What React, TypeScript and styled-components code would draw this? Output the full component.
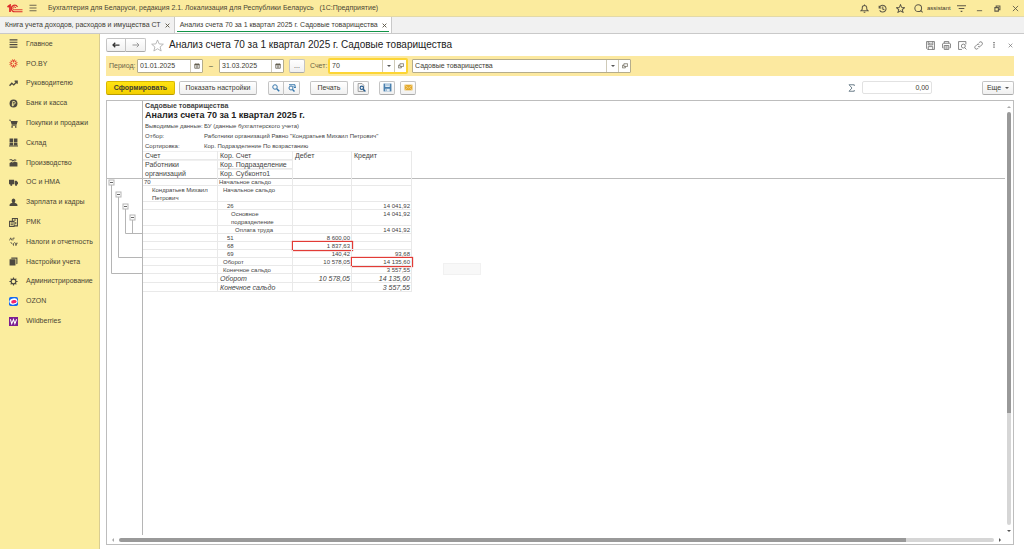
import React from "react";
import styled, { createGlobalStyle, css } from "styled-components";

const Global = createGlobalStyle`
  * { box-sizing: border-box; }
  html, body, #root { height: 100%; }
  body {
    margin: 0;
    background: #fff;
    color: #403c33;
    font: 7px/10px "Liberation Sans", Arial, sans-serif;
    overflow: hidden;
  }
  button, input { font: inherit; color: inherit; }
  ul, h1, h2, p, dl, dd { margin: 0; padding: 0; }
  svg { display: block; flex: none; }
`;

/* ---------- icons ---------- */

const paths: Record<string, React.ReactNode> = {
  menu: <path d="M1 2.5h14M1 8h14M1 13.5h14" />,
  bell: <path d="M1.500 12h13l-2.500-2.500V6.500C12 4 10.500 2.500 8 2.500S4 4 4 6.500v3zM6.500 14.500h3M8 1v1.500" />,
  history: <path d="M2 3v4h4M2.500 7A6 6 0 1 1 3 11M8.500 4.500V9l3 1.500" />,
  star: <path d="M8 1.200l2 4.800 5.200.4-4 3.400 1.300 5L8 12l-4.500 2.800 1.300-5-4-3.400L6 6z" />,
  search: <><circle cx="7.500" cy="7.500" r="6" /><path d="M11.500 11.500l4 3.500" /></>,
  filter: <path d="M0 3h16M3 8h10M6.500 13h3" />,
  min: <path d="M2 13h12" />,
  restore: <><path d="M2 6h8v8H2zM5 6V2.500h8.500v8.500H10" /></>,
  close: <path d="M2 2l12 12M14 2L2 14" />,
  save: <><path d="M1 1h14v14H3l-2-2z" /><path d="M4 1v6h8V1M4 15v-5h8v5M6.500 3v3M9 3v3" /></>,
  print: <><path d="M4 4V1h8v3M2.500 12H1V5l2-1h10l2 1v7h-1.500" /><path d="M4 8h8v7H4zM6 10.500h4M6 12.700h4" /></>,
  preview: <><path d="M14 6V1H1v14h6" /><circle cx="9.500" cy="9" r="3.500" /><path d="M12 12l3 3" /></>,
  link: <path d="M7 9.500a3 3 0 0 0 4.300 0L14.500 6A3 3 0 0 0 10.200 2L8.500 3.500M9.500 6.500a3 3 0 0 0-4.300 0L1.800 10A3 3 0 0 0 6 14l1.500-1.500" />,
  left: <path d="M15 8H2M6.500 3.500L2 8l4.500 4.500" />,
  right: <path d="M1 8h13M9.500 3.500L14 8l-4.500 4.500" />,
  calendar: <><path d="M2 3h12v11H2z" /><path d="M2 4.500h12" strokeWidth="3" /><path d="M5 1v3M11 1v3M5 8h6M5 11h6" /></>,
  open: <><path d="M5 2h10v7H5z" /><path d="M5 6H1v7h8V9" /></>,
};

type IconProps = { name: keyof typeof paths; size?: number; color?: string; w?: number };
const Icon = ({ name, size = 9, color = "#5d5848", w = 1.6 }: IconProps) => (
  <svg width={size} height={size} viewBox="0 0 16 16" fill="none" stroke={color} strokeWidth={w} aria-hidden>
    {paths[name]}
  </svg>
);

const dark = "#4d4940";
const navIcons: Record<string, React.ReactNode> = {
  main: <path d="M1 1.500h14M1 5.800h14M1 10.100h14M1 14.400h14" stroke={dark} strokeWidth="2" />,
  po: <g stroke="#e2492f" strokeWidth="1.800" fill="none"><path d="M6 1l2 4 2-4M6 15l2-4 2 4M1 6l4 2-4 2M15 6l-4 2 4 2M3 3l2.500 2.500M13 3l-2.500 2.500M3 13l2.500-2.500M13 13l-2.500-2.500" /></g>,
  chief: <path d="M1 12l4-4.500 3.500 3L14 4.500M10 4h4.500v4.500" fill="none" stroke={dark} strokeWidth="2.400" />,
  bank: <><circle cx="8" cy="8" r="7" fill={dark} /><path d="M6.500 13V4.500H9a2 2 0 0 1 0 4.500H5M5 11h4" fill="none" stroke="#fbed9e" strokeWidth="1.500" /></>,
  cart: <><path d="M0 1.500h3l.6 2H15.500l-2 6.500H4.800L2.500 2.800H0z" fill={dark} /><path d="M4.500 11.500h9" stroke={dark} strokeWidth="1.300" /><circle cx="5.500" cy="14" r="1.500" fill={dark} /><circle cx="12" cy="14" r="1.500" fill={dark} /></>,
  stock: <path d="M1 1h6.300v6H1zM8.700 1H15v6H8.700zM1 8h6.300v5H1zM8.700 8H15v5H8.700zM0 13.500h16V15H0z" fill={dark} />,
  factory: <path d="M1 15V9l5-3v2.500L10 6l5 2v7zM1 2h4l2 2 3-2 3 1v2l-3-.500-3 1.500-3-2H1z" fill={dark} />,
  truck: <><path d="M0 3h9v8H0zM10 5h3.500L16 8v3h-6z" fill={dark} /><circle cx="4" cy="12" r="2" fill={dark} /><circle cx="12.500" cy="12" r="2" fill={dark} /></>,
  person: <path d="M8 1a3.500 3.800 0 0 1 2 6.800c0 1.200 5 1.500 5 4.200v2H1v-2c0-2.700 5-3 5-4.200A3.500 3.800 0 0 1 8 1z" fill={dark} />,
  rmk: <g fill="none" stroke={dark} strokeWidth="1.800"><path d="M1 6h8v9H1zM6 6V1h9v13H9M8.500 3.500h4M12 7v4M3 9h4M3 12h4" /></g>,
  tax: <g fill="none" stroke={dark} strokeWidth="1.500"><path d="M1 6l2-4.500L5 6M7 6V2h3M8 15.500v-4l2-1.500 2 1.500v4M13 15V11h2.500M3 9l3 4" /></g>,
  books: <path d="M4 1h11v11l-2 1V3H4zM1 4h10.500v11H1zM2 2.500h1.500V3H14" fill={dark} />,
  gear: <g stroke={dark}><circle cx="8" cy="8" r="4.200" fill="none" strokeWidth="2" /><path d="M8 .8v3M8 12.200v3M.8 8h3M12.200 8h3M3 3l2 2M11 11l2 2M13 3l-2 2M3 13l2-2" strokeWidth="2" /></g>,
  ozon: <><rect width="16" height="16" rx="3" fill="#1668ef" /><ellipse cx="8" cy="8" rx="7.300" ry="5.500" fill="#fff" transform="rotate(-12 8 8)" /><ellipse cx="8.500" cy="8.500" rx="4.800" ry="3" fill="#f4246c" transform="rotate(-12 8 8)" /></>,
  wb: <><rect width="16" height="16" fill="#7d1f91" /><path d="M2.500 4l2.300 8L8 4.500 10.500 12 13.500 4" fill="none" stroke="#fff" strokeWidth="1.800" /></>,
};

/* ---------- window frame ---------- */

const Window = styled.div`
  display: flex;
  flex-direction: column;
  height: 100vh;
`;

const TitleBar = styled.header`
  display: flex;
  align-items: center;
  height: 17px;
  padding-left: 7px;
  background: #fbeb9e;
  border-bottom: 1px solid #e3d9a8;
`;

const AppName = styled.span`
  flex: 1;
  padding-left: 5px;
  color: #4a4535;
  white-space: pre;
`;

const PlainButton = styled.button<{ $w?: number }>`
  display: flex;
  align-items: center;
  justify-content: center;
  width: ${(p) => p.$w ?? 18}px;
  height: 12px;
  padding: 0;
  border: 0;
  background: none;
`;

const UserName = styled.span`
  width: 25px;
  font-size: 6px;
  color: #3d392c;
`;

const Tabs = styled.nav`
  display: flex;
  height: 17px;
  background: #f1f1f1;
  border-bottom: 1px solid #c9c9c9;
`;

const Tab = styled.div<{ $active?: boolean }>`
  display: flex;
  align-items: center;
  gap: 3px;
  padding: 0 2px 0 5px;
  border-right: 1px solid #c9c9c9;
  ${(p) =>
    p.$active &&
    css`
      background: linear-gradient(#129447, #129447) 2px 14px / calc(100% - 4px) 1px no-repeat, #fff;
    `}
`;

const TabLink = styled.a`
  color: #403c33;
  text-decoration: none;
`;

const Body = styled.div`
  display: flex;
  flex: 1;
  min-height: 0;
`;

const Sidebar = styled.nav`
  flex: none;
  width: 100px;
  background: #fbed9e;
  border-right: 1px solid #d9cd92;
`;

const NavList = styled.ul`
  display: grid;
  grid-auto-rows: 1fr;
  height: 297px;
  list-style: none;
`;

const NavLink = styled.a`
  display: flex;
  align-items: center;
  gap: 8px;
  height: 100%;
  padding-left: 9px;
  color: #4a4535;
  text-decoration: none;
  white-space: nowrap;
`;

const Main = styled.main`
  display: flex;
  flex: 1;
  flex-direction: column;
  min-width: 0;
  padding: 0 10px 4px 6px;
`;

/* ---------- heading, filters, commands ---------- */

const Heading = styled.div`
  display: flex;
  align-items: center;
  height: 22px;
  margin-right: -4px;
`;

const Title = styled.h1`
  flex: 1;
  color: #222;
  font: 10px/14px "Liberation Sans", Arial, sans-serif;
`;

const Segmented = styled.div`
  display: flex;
  button + button { border-left: 0; border-radius: 0 2px 2px 0; }
  button:first-child { border-radius: 2px 0 0 2px; }
`;

const Button = styled.button<{ $primary?: boolean; $w?: number }>`
  display: flex;
  align-items: center;
  justify-content: center;
  gap: 4px;
  flex: none;
  width: ${(p) => (p.$w ? `${p.$w}px` : "auto")};
  height: 14px;
  padding: 0 6px;
  border: 1px solid #c4c4c4;
  border-bottom-color: #aaa;
  border-radius: 2px;
  background: linear-gradient(#fff, #f0f0f0);
  white-space: nowrap;
  ${(p) =>
    p.$primary &&
    css`
      border-color: #d9b800;
      border-bottom-color: #b89b00;
      background: linear-gradient(#ffe312, #f3cf00);
      font-weight: bold;
    `}
`;

const StarButton = styled(PlainButton)`
  margin: 0 3px 0 2px;
`;

const Filters = styled.form`
  display: flex;
  align-items: center;
  height: 20px;
  padding-left: 3px;
  background: #fce9a0;
`;

const FieldLabel = styled.label<{ $w: number }>`
  width: ${(p) => p.$w}px;
  color: #6b6447;
`;

const Field = styled.div<{ $w: number; $focus?: boolean }>`
  display: flex;
  flex: none;
  width: ${(p) => p.$w}px;
  height: 14px;
  border: 1px solid #b5ad8c;
  border-radius: 1px;
  background: #fff;
  ${(p) =>
    p.$focus &&
    css`
      border-color: #d9c888;
      outline: 2px solid #fcd535;
      outline-offset: -1px;
    `}
`;

const Input = styled.input<{ $right?: boolean }>`
  flex: 1;
  min-width: 0;
  padding: 0 2px;
  border: 0;
  outline: 0;
  background: none;
  text-align: ${(p) => (p.$right ? "right" : "left")};
`;

const FieldButton = styled.button`
  display: flex;
  align-items: center;
  justify-content: center;
  width: 12px;
  padding: 0;
  border: 0;
  border-left: 1px solid #cfcab8;
  background: none;
`;

const Caret = styled.span`
  border: 2px solid transparent;
  border-top-color: #555;
  border-bottom: 0;
`;

const Dash = styled.span`
  width: 16px;
  text-align: center;
`;

const Gap = styled.span<{ $w?: number }>`
  flex: ${(p) => (p.$w ? "none" : 1)};
  width: ${(p) => p.$w ?? 0}px;
`;

const Toolbar = styled.div`
  display: flex;
  align-items: center;
  height: 23px;
`;

const Sum = styled.div`
  display: flex;
  width: 70px;
  height: 13px;
  border: 1px solid #e2e2e2;
  border-radius: 2px;
`;

/* ---------- spreadsheet ---------- */

const Frame = styled.section`
  display: grid;
  grid-template: minmax(0, 1fr) 9px / 36px minmax(0, 1fr) 8px;
  flex: 1;
  min-height: 0;
  margin-top: 1px;
  border: 1px solid #bdbdbd;
`;

const Gutter = styled.div`
  border-right: 1px solid #b5b5b5;
`;

const GutterHead = styled.div`
  height: 78px;
  border-bottom: 1px solid #bbb;
`;

const Sheet = styled.div`
  position: relative;
  overflow: hidden;
  color: #444;
`;

const ReportHead = styled.div`
  height: 50px;
  padding-left: 2px;
`;

const Org = styled.p`
  font-weight: bold;
  line-height: 9px;
`;

const ReportTitle = styled.h2`
  color: #222;
  font-size: 9px;
  line-height: 11px;
`;

const Params = styled.dl`
  display: grid;
  grid-template-columns: 59px 1fr;
  font-size: 6px;
  line-height: 10px;
`;

const Table = styled.table`
  width: 100%;
  border-spacing: 0;
  table-layout: fixed;
  font-size: 6px;
  line-height: 8px;
`;

const HeadCell = styled.th`
  padding: 0 2px;
  box-shadow: inset -1px -1px #e9e9e9, inset 0 1px #f0f0f0;
  font-size: 7px;
  font-weight: normal;
  line-height: 9px;
  text-align: left;
  vertical-align: top;
`;

/* The freeze line lies over the first pixel of the body. */
const LastHeadCell = styled(HeadCell)`
  box-shadow: 0 1px #bbb, inset -1px 0 #e9e9e9, inset 0 1px #f0f0f0;
`;

const HeadFiller = styled.th`
  padding: 0;
  box-shadow: 0 1px #bbb;
`;

const Cell = styled.td<{ $indent?: number; $num?: boolean; $total?: boolean; $mark?: boolean }>`
  position: relative;
  padding: 0 2px 0 ${(p) => 1 + (p.$indent ?? 0) * 4}px;
  box-shadow: inset -1px -1px #e9e9e9;
  text-align: ${(p) => (p.$num ? "right" : "left")};
  vertical-align: top;
  ${(p) =>
    p.$total &&
    css`
      padding-left: 2px;
      font-size: 7px;
      font-style: italic;
      line-height: 9px;
    `}
  ${(p) =>
    p.$mark &&
    css`
      &::after {
        content: "";
        position: absolute;
        inset: -1px;
        border: 1px solid #e23b36;
        box-shadow: 0 0 1px #e23b36;
      }
    `}
`;

const Placeholder = styled.div`
  position: absolute;
  left: 300px;
  top: 162px;
  width: 38px;
  height: 12px;
  border: 1px solid #f1f1f1;
  background: #f8f8f8;
`;

const VScroll = styled.div`
  display: flex;
  flex-direction: column;
  align-items: center;
  justify-content: space-between;
  grid-column: 3;
  padding: 5px 0 3px;
`;

const HScroll = styled.div`
  display: flex;
  align-items: center;
  justify-content: space-between;
  grid-column: 1 / 3;
  padding: 0 4px 0 5px;
`;

const Track = styled.div<{ $vertical?: boolean }>`
  flex: 1;
  margin: ${(p) => (p.$vertical ? "4px 0 5px" : "0 5px")};
  width: ${(p) => (p.$vertical ? "4px" : "auto")};
  height: ${(p) => (p.$vertical ? "auto" : "4px")};
  border-radius: 2px;
  background: linear-gradient(
    ${(p) => (p.$vertical ? "to bottom, #999 73%, #d6d6d6 73%" : "to right, #999 90%, #d6d6d6 90%")}
  );
`;

const arrowSides = {
  up: ["bottom", "top"],
  down: ["top", "bottom"],
  left: ["right", "left"],
  right: ["left", "right"],
};

const Arrow = styled.span<{ $dir: keyof typeof arrowSides; $faint?: boolean }>`
  border: 2px solid transparent;
  border-${(p) => arrowSides[p.$dir][0]}-color: ${(p) => (p.$faint ? "#aaa" : "#555")};
  border-${(p) => arrowSides[p.$dir][1]}-width: 0;
`;

/* ---------- data ---------- */

const nav: [string, string][] = [
  ["main", "Главное"],
  ["po", "PO.BY"],
  ["chief", "Руководителю"],
  ["bank", "Банк и касса"],
  ["cart", "Покупки и продажи"],
  ["stock", "Склад"],
  ["factory", "Производство"],
  ["truck", "ОС и НМА"],
  ["person", "Зарплата и кадры"],
  ["rmk", "РМК"],
  ["tax", "Налоги и отчетность"],
  ["books", "Настройки учета"],
  ["gear", "Администрирование"],
  ["ozon", "OZON"],
  ["wb", "Wildberries"],
];

type Row = {
  name?: string;
  nameIndent?: number;
  corr: string;
  indent?: number;
  debit?: string;
  credit?: string;
  mark?: "debit" | "credit";
  total?: boolean;
};

const rows: Row[] = [
  { name: "70", corr: "Начальное сальдо" },
  { name: "Кондратьев Михаил Петрович", nameIndent: 2, corr: "Начальное сальдо", indent: 1 },
  { corr: "26", indent: 2, credit: "14 041,92" },
  { corr: "Основное подразделение", indent: 3, credit: "14 041,92" },
  { corr: "Оплата труда", indent: 4, credit: "14 041,92" },
  { corr: "51", indent: 2, debit: "8 600,00" },
  { corr: "68", indent: 2, debit: "1 837,63", mark: "debit" },
  { corr: "69", indent: 2, debit: "140,42", credit: "93,68" },
  { corr: "Оборот", indent: 1, debit: "10 578,05", credit: "14 135,60", mark: "credit" },
  { corr: "Конечное сальдо", indent: 1, credit: "3 557,55" },
  { corr: "Оборот", debit: "10 578,05", credit: "14 135,60", total: true },
  { corr: "Конечное сальдо", credit: "3 557,55", total: true },
];

const params = [
  ["Выводимые данные:", "БУ (данные бухгалтерского учета)"],
  ["Отбор:", "Работники организаций Равно \"Кондратьев Михаил Петрович\""],
  ["Сортировка:", "Кор. Подразделение По возрастанию"],
];

const windowTools = [
  ["bell", "Уведомления"],
  ["history", "История"],
  ["star", "Избранное"],
  ["search", "Поиск"],
];

const documentTools = [
  ["save", "Сохранить"],
  ["print", "Печать"],
  ["preview", "Просмотр"],
  ["link", "Ссылка"],
];

const Logo = () => (
  <svg width="16" height="9" viewBox="0 0 32 18" fill="none" stroke="#dc2a2a" aria-label="1С">
    <path d="M1 6l5-3.500V16" strokeWidth="3.500" />
    <path d="M21 6A6.500 6.500 0 1 0 15.500 15.500H31" strokeWidth="2.400" />
    <path d="M17.500 8A3 3 0 1 0 15.500 11.500H31" strokeWidth="1.800" />
  </svg>
);

const Tree = () => (
  <svg width="35" height="100" viewBox="0 0 35 100" fill="none" stroke="#b5b5b5" aria-hidden>
    <path d="M4.500 6v88.500H35M11.500 18v60.500H35M18.500 30v24.500H35M25.500 41v13.500" />
    {[[4.5, 3.5], [11.5, 15.5], [18.5, 27.5], [25.5, 38.5]].map(([x, y]) => (
      <g key={x}>
        <rect x={x - 2.5} y={y - 2.5} width="5" height="5" fill="#fff" />
        <path d={`M${x - 1.5} ${y}h3`} stroke="#666" />
      </g>
    ))}
  </svg>
);

export default function App() {
  return (
    <Window>
      <Global />
      <TitleBar>
        <Logo />
        <PlainButton $w={20} aria-label="Меню"><Icon name="menu" size={8} w={1.8} /></PlainButton>
        <AppName>{"Бухгалтерия для Беларуси, редакция 2.1. Локализация для Республики Беларусь   (1С:Предприятие)"}</AppName>
        {windowTools.map(([name, label]) => (
          <PlainButton key={name} aria-label={label}><Icon name={name} w={1.8} /></PlainButton>
        ))}
        <UserName>assistant</UserName>
        <PlainButton aria-label="Панели"><Icon name="filter" w={2} /></PlainButton>
        <PlainButton aria-label="Свернуть"><Icon name="min" size={7} w={2} /></PlainButton>
        <PlainButton aria-label="Развернуть"><Icon name="restore" size={7} w={2.4} /></PlainButton>
        <PlainButton aria-label="Закрыть"><Icon name="close" size={7} w={2} /></PlainButton>
      </TitleBar>

      <Tabs>
        <Tab>
          <TabLink href="#book">Книга учета доходов, расходов и имущества СТ</TabLink>
          <PlainButton $w={8} aria-label="Закрыть вкладку"><Icon name="close" size={5} w={3} /></PlainButton>
        </Tab>
        <Tab $active>
          <TabLink href="#analysis">Анализ счета 70 за 1 квартал 2025 г. Садовые товарищества</TabLink>
          <PlainButton $w={8} aria-label="Закрыть вкладку"><Icon name="close" size={5} w={3} /></PlainButton>
        </Tab>
      </Tabs>

      <Body>
        <Sidebar>
          <NavList>
            {nav.map(([icon, label]) => (
              <li key={icon}>
                <NavLink href={`#${icon}`}>
                  <svg width="9" height="9" viewBox="0 0 16 16" aria-hidden>{navIcons[icon]}</svg>
                  {label}
                </NavLink>
              </li>
            ))}
          </NavList>
        </Sidebar>

        <Main>
          <Heading>
            <Segmented>
              <Button $w={20} aria-label="Назад"><Icon name="left" size={8} w={2.5} color="#333" /></Button>
              <Button $w={20} aria-label="Вперед"><Icon name="right" size={8} w={2} color="#999" /></Button>
            </Segmented>
            <StarButton aria-label="В избранное"><Icon name="star" size={13} w={1} color="#aaa" /></StarButton>
            <Title>Анализ счета 70 за 1 квартал 2025 г. Садовые товарищества</Title>
            {documentTools.map(([name, label]) => (
              <PlainButton key={name} $w={16} aria-label={label}><Icon name={name} color="#666" w={1.4} /></PlainButton>
            ))}
            <PlainButton $w={16} aria-label="Еще">
              <svg width="2" height="8" viewBox="0 0 2 8" fill="#666"><path d="M.3 1h1.400v1.200H.3zM.3 3.300h1.400v1.200H.3zM.3 5.600h1.400v1.200H.3z" /></svg>
            </PlainButton>
            <PlainButton $w={16} aria-label="Закрыть"><Icon name="close" size={5} w={2} color="#666" /></PlainButton>
          </Heading>

          <Filters>
            <FieldLabel $w={28} htmlFor="from">Период:</FieldLabel>
            <Field $w={66}>
              <Input id="from" defaultValue="01.01.2025" />
              <FieldButton type="button" aria-label="Календарь"><Icon name="calendar" size={6} w={2} /></FieldButton>
            </Field>
            <Dash>–</Dash>
            <Field $w={65}>
              <Input aria-label="Конец периода" defaultValue="31.03.2025" />
              <FieldButton type="button" aria-label="Календарь"><Icon name="calendar" size={6} w={2} /></FieldButton>
            </Field>
            <Gap $w={5} />
            <Button type="button" $w={16}>...</Button>
            <Gap $w={5} />
            <FieldLabel $w={19} htmlFor="account">Счет:</FieldLabel>
            <Field $w={78} $focus>
              <Input id="account" defaultValue="70" />
              <FieldButton type="button" aria-label="Выбрать счет"><Caret /></FieldButton>
              <FieldButton type="button" aria-label="Открыть счет"><Icon name="open" size={6} w={1.8} /></FieldButton>
            </Field>
            <Gap $w={5} />
            <Field $w={219}>
              <Input aria-label="Организация" defaultValue="Садовые товарищества" />
              <FieldButton type="button" aria-label="Выбрать организацию"><Caret /></FieldButton>
              <FieldButton type="button" aria-label="Открыть организацию"><Icon name="open" size={6} w={1.8} /></FieldButton>
            </Field>
          </Filters>

          <Toolbar>
            <Button $primary $w={69}>Сформировать</Button>
            <Gap $w={4} />
            <Button $w={78}>Показать настройки</Button>
            <Gap $w={11} />
            <Segmented>
              <Button $w={16} aria-label="Найти">
                <svg width="8" height="8" viewBox="0 0 16 16" fill="none" stroke="#3878ad" strokeWidth="2"><circle cx="6" cy="6" r="4.500" /><path d="M9.500 9.500l5 5" strokeWidth="3" /></svg>
              </Button>
              <Button $w={16} aria-label="Найти далее">
                <svg width="8" height="8" viewBox="0 0 16 16" fill="none" stroke="#3878ad" strokeWidth="2"><circle cx="6" cy="8" r="4" /><path d="M9 11l4 4" strokeWidth="3" /><path d="M2 1.500h12v6M11 5l3 3 2-3" /></svg>
              </Button>
            </Segmented>
            <Gap $w={10} />
            <Button $w={38}>Печать</Button>
            <Gap $w={5} />
            <Button $w={16} aria-label="Предварительный просмотр">
              <svg width="9" height="9" viewBox="0 0 16 16" fill="none"><path d="M2 1h7l3 3v11H2z" stroke="#888" strokeWidth="1.400" /><circle cx="8.500" cy="8.500" r="3" stroke="#245a8c" strokeWidth="2" /><path d="M11 11l4 4" stroke="#245a8c" strokeWidth="2.600" /></svg>
            </Button>
            <Gap $w={10} />
            <Button $w={16} aria-label="Сохранить">
              <svg width="9" height="9" viewBox="0 0 16 16"><path d="M1 1h14v14H1z" fill="#4a80ae" /><path d="M4 1h8v6H4zM4 10h8v5H4z" fill="#dfeaf3" /><path d="M5 3.500h6M6 11v3" stroke="#4a80ae" /></svg>
            </Button>
            <Gap $w={5} />
            <Button $w={16} aria-label="Отправить по почте">
              <svg width="9" height="9" viewBox="0 0 16 16"><path d="M1 3h14v10H1z" fill="#e3a92c" /><path d="M1.500 4l6.500 5 6.500-5M1.500 12.500l4.500-4.500M14.500 12.500L10 8" fill="none" stroke="#fbe6ad" /></svg>
            </Button>
            <Gap />
            <svg width="7" height="8" viewBox="0 0 14 16" fill="none" stroke="#71838f" strokeWidth="2"><path d="M12.500 4V1.500H2L8 8l-6 6.500h10.500V12" /></svg>
            <Gap $w={7} />
            <Sum><Input $right aria-label="Сумма" readOnly defaultValue="0,00" /></Sum>
            <Gap $w={50} />
            <Button $w={32}>Еще <Caret /></Button>
          </Toolbar>

          <Frame>
            <Gutter>
              <GutterHead />
              <Tree />
            </Gutter>
            <Sheet>
              <ReportHead>
                <Org>Садовые товарищества</Org>
                <ReportTitle>Анализ счета 70 за 1 квартал 2025 г.</ReportTitle>
                <Params>
                  {params.map(([k, v]) => (
                    <React.Fragment key={k}>
                      <dt>{k}</dt>
                      <dd>{v}</dd>
                    </React.Fragment>
                  ))}
                </Params>
              </ReportHead>
              <Table>
                <colgroup>
                  <col width="75" />
                  <col width="75" />
                  <col width="59" />
                  <col width="60" />
                  <col />
                </colgroup>
                <thead>
                  <tr>
                    <HeadCell>Счет</HeadCell>
                    <HeadCell>Кор. Счет</HeadCell>
                    <LastHeadCell rowSpan={3}>Дебет</LastHeadCell>
                    <LastHeadCell rowSpan={3}>Кредит</LastHeadCell>
                    <HeadFiller rowSpan={3} />
                  </tr>
                  <tr>
                    <LastHeadCell rowSpan={2}>Работники<br />организаций</LastHeadCell>
                    <HeadCell>Кор. Подразделение</HeadCell>
                  </tr>
                  <tr>
                    <LastHeadCell>Кор. Субконто1</LastHeadCell>
                  </tr>
                </thead>
                <tbody>
                  {rows.map((r, i) => (
                    <tr key={i}>
                      <Cell $indent={r.nameIndent} $total={r.total}>{r.name}</Cell>
                      <Cell $indent={r.indent} $total={r.total}>{r.corr}</Cell>
                      <Cell $num $total={r.total} $mark={r.mark === "debit"}>{r.debit}</Cell>
                      <Cell $num $total={r.total} $mark={r.mark === "credit"}>{r.credit}</Cell>
                    </tr>
                  ))}
                </tbody>
              </Table>
              <Placeholder />
            </Sheet>
            <VScroll>
              <Arrow $dir="up" $faint />
              <Track $vertical />
              <Arrow $dir="down" />
            </VScroll>
            <HScroll>
              <Arrow $dir="left" $faint />
              <Track />
              <Arrow $dir="right" />
            </HScroll>
          </Frame>
        </Main>
      </Body>
    </Window>
  );
}
